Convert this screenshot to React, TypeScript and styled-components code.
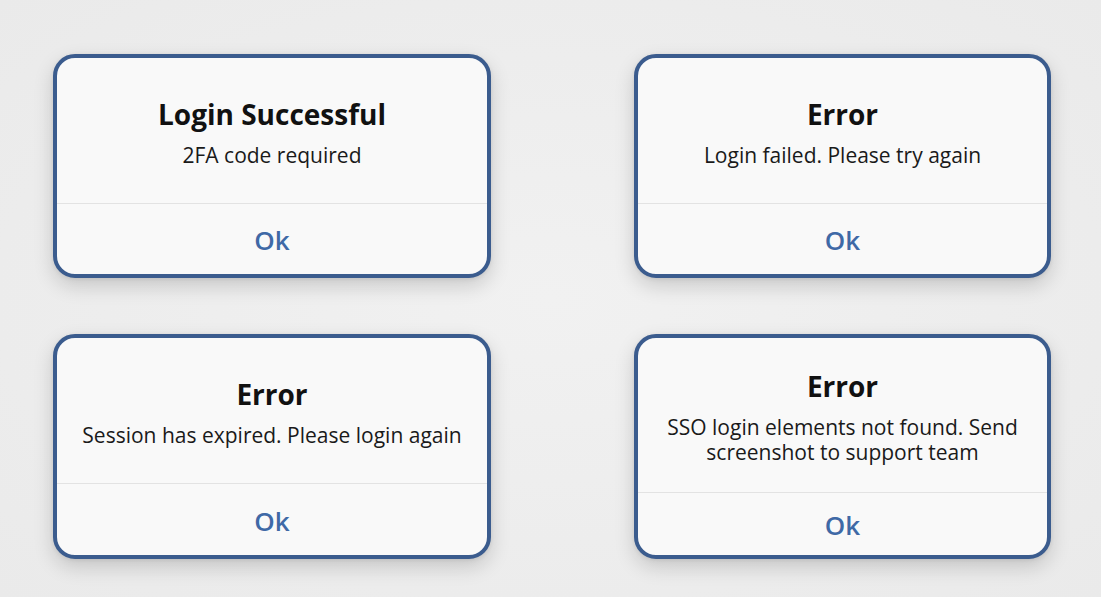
import styled, { createGlobalStyle } from 'styled-components';

// fundo cinza claro e fonte padrão
const GlobalStyle = createGlobalStyle`
  html, body {
    margin: 0;
    padding: 0;
    background: #ececec;
    font-family: "Open Sans", "Noto Sans", sans-serif;
  }
`;

interface AlertProps {
  title: string;
  message: string;
  action?: string;
}

const Page = styled.div`
  width: 1101px;
  height: 597px;
  box-sizing: border-box;
  padding: 54px 0 0 53px;
  display: grid;
  grid-template-columns: 438px 417px;
  grid-template-rows: 224px 225px;
  column-gap: 143px;
  row-gap: 56px;
  background: radial-gradient(ellipse at center, #f1f1f1 0%, #eaeaea 100%);
`;

const Card = styled.div`
  box-sizing: border-box;
  height: 100%;
  display: flex;
  flex-direction: column;
  background: #f9f9f9;
  border: 4px solid #3b5c8e;
  border-radius: 22px;
  box-shadow: 0 8px 20px rgba(0, 0, 0, 0.16), 0 1px 4px rgba(0, 0, 0, 0.08);
  overflow: hidden;
`;

const Body = styled.div`
  min-height: 146px;
  box-sizing: border-box;
  padding: 33px 22px 27px;
  display: flex;
  flex-direction: column;
  justify-content: center;
  align-items: center;
  text-align: center;
  border-bottom: 1px solid #e3e3e3;
`;

const Title = styled.h2`
  margin: 0 0 14px;
  font-size: 28px;
  line-height: 30px;
  font-weight: 700;
  color: #111;
`;

const Message = styled.p`
  margin: 0;
  font-size: 21px;
  line-height: 25px;
  color: #1a1a1a;
`;

const Footer = styled.button`
  flex: 1;
  border: none;
  background: transparent;
  font-family: inherit;
  font-size: 26px;
  font-weight: 600;
  color: #3f69a6;
  cursor: pointer;
  padding: 2px 0 0;
`;

const Alert = ({ title, message, action = 'Ok' }: AlertProps) => (
  <Card>
    <Body>
      <Title>{title}</Title>
      <Message>{message}</Message>
    </Body>
    <Footer>{action}</Footer>
  </Card>
);

const alerts: AlertProps[] = [
  { title: 'Login Successful', message: '2FA code required' },
  { title: 'Error', message: 'Login failed. Please try again' },
  { title: 'Error', message: 'Session has expired. Please login again' },
  { title: 'Error', message: 'SSO login elements not found. Send screenshot to support team' },
];

export default function App() {
  return (
    <>
      <GlobalStyle />
      <Page>
        {alerts.map((a, i) => (
          <Alert key={i} title={a.title} message={a.message} />
        ))}
      </Page>
    </>
  );
}
